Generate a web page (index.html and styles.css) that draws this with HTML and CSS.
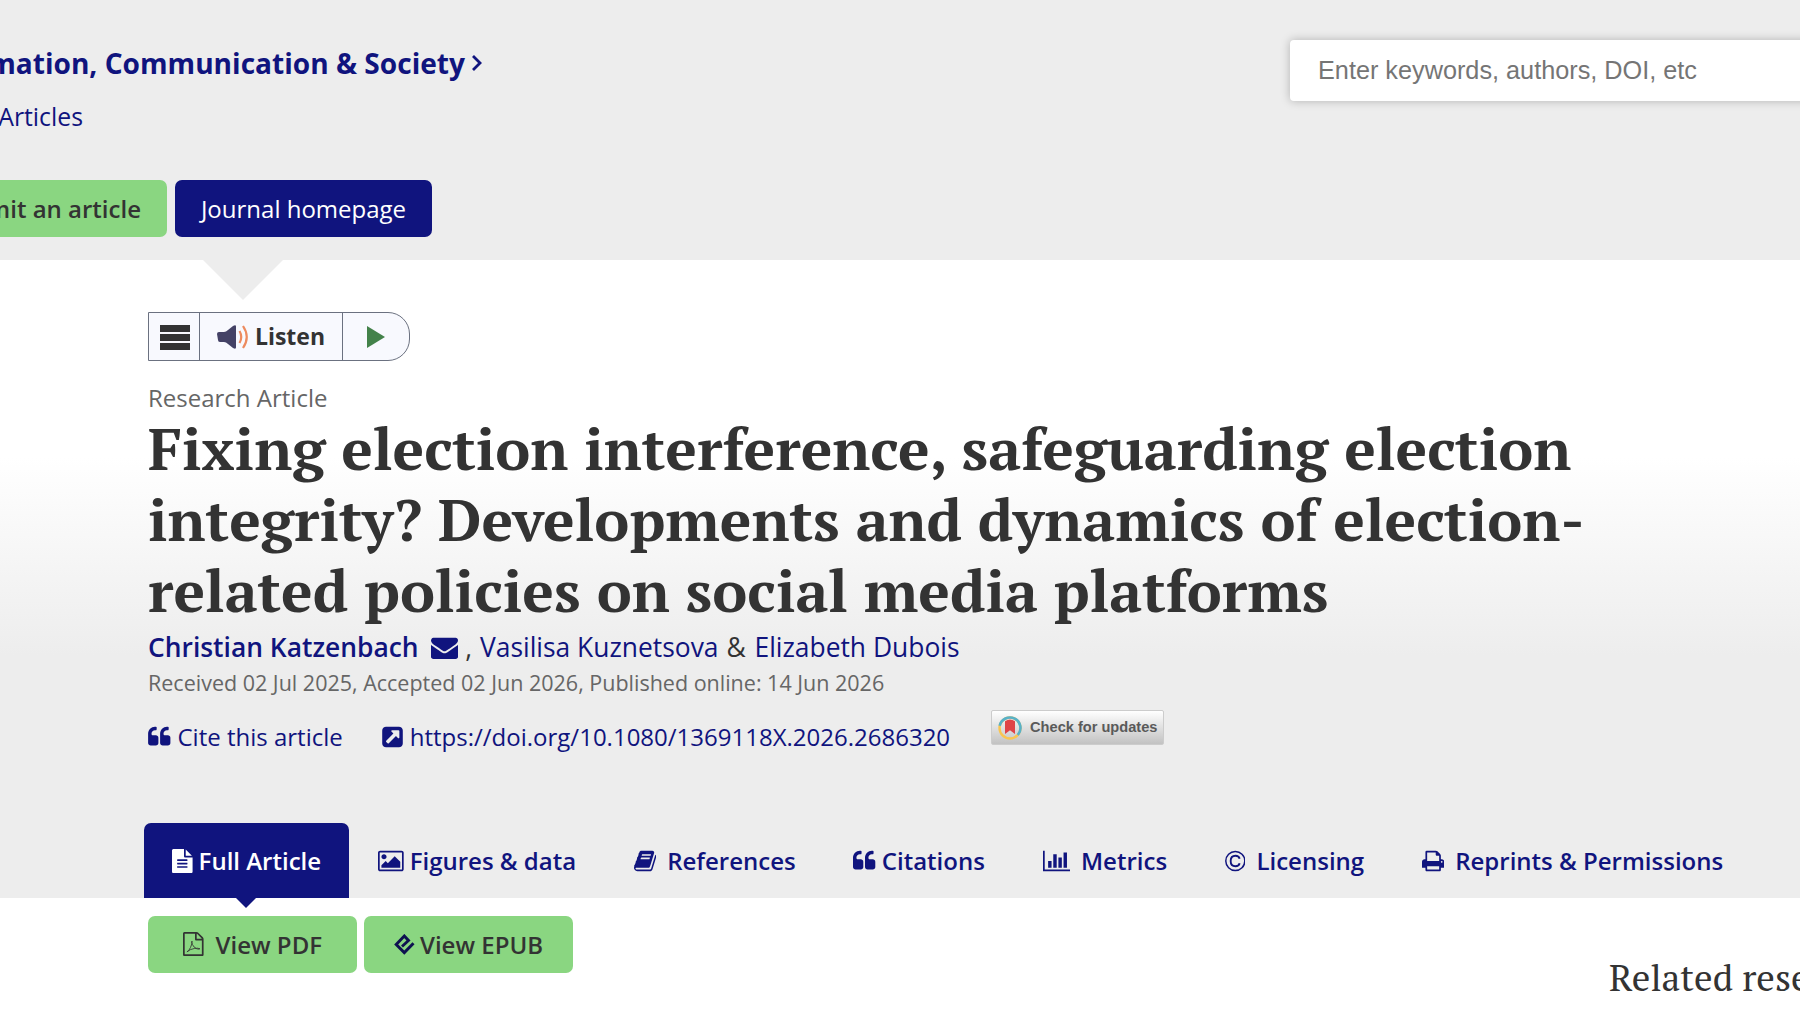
FILE: index.html
```html
<!DOCTYPE html>
<html lang="en">
<head>
    <meta charset="UTF-8">
    <meta name="viewport" content="width=device-width, initial-scale=1.0">
    <title>Fixing election interference, safeguarding election integrity?</title>
    <link rel="stylesheet" href="styles.css">
</head>
<body>

    <header class="journal-header">
        <div class="journal-info">
            <a class="journal-title" href="#"><span>Information, Communication &amp; Society</span>
                <svg class="chevron" viewBox="0 0 10 16"><path d="M1 1l7 7-7 7" fill="none" stroke="currentColor" stroke-width="2.800"/></svg>
            </a>
            <a class="journal-sub" href="#">Latest Articles</a>
            <div class="journal-buttons">
                <a class="btn btn-submit" href="#">Submit an article</a>
                <a class="btn btn-home" href="#">Journal homepage</a>
            </div>
        </div>
        <input class="search" type="text" placeholder="Enter keywords, authors, DOI, etc">
    </header>

    <main class="article">
        <div class="listen">
            <span class="listen-menu"><i></i><i></i><i></i></span>
            <span class="listen-main">
                <svg class="speaker" viewBox="0 0 32 24">
                    <path d="M0 9q0-2 2-2h5q2 0 4-2l5-4q3-1.500 3 .5v21q0 2-3 .5l-5-4q-2-2-4-2H3q-2 0-2-2z" fill="#444266"/>
                    <path d="M22.500 6q3.500 6 0 12M26 1q7.500 11 0 22" fill="none" stroke="#ed8b5f" stroke-width="2.200"/>
                </svg>
                <b>Listen</b>
            </span>
            <span class="listen-play"><svg viewBox="0 0 18 22"><path d="M0 0l18 11L0 22z" fill="#43824a"/></svg></span>
        </div>

        <div class="article-type">Research Article</div>
        <h1 class="article-title">Fixing election interference, safeguarding election integrity? Developments and dynamics of election-related policies on social media platforms</h1>

        <div class="authors">
            <a class="corresponding" href="#">Christian Katzenbach</a>
            <svg class="envelope" viewBox="0 0 1792 1792"><path d="M1792 710v794q0 66-47 113t-113 47h-1472q-66 0-113-47t-47-113v-794q44 49 101 87 362 246 497 345 57 42 92.500 65.500t94.500 48 110 24.500h2q51 0 110-24.500t94.500-48 92.500-65.500q170-123 498-345 57-39 100-87zm0-294q0 79-49 151t-122 123q-376 261-468 325-10 7-42.500 31t-54 38.500-52 32.500-57.500 27-50 9h-2q-23 0-50-9t-57.500-27-52-32.500-54-38.500-42.500-31q-91-64-262-182.500t-205-142.500q-62-42-117-115.500t-55-136.500q0-78 41.500-130t118.500-52h1472q65 0 112.500 47t47.500 113z"/></svg>
            <span class="comma">,</span>
            <a href="#">Vasilisa Kuznetsova</a> <span class="amp">&amp;</span> <a href="#">Elizabeth Dubois</a>
        </div>
        <div class="dates">Received 02 Jul 2025, Accepted 02 Jun 2026, Published online: 14 Jun 2026</div>

        <div class="article-links">
            <a class="cite" href="#"><svg class="icon" style="width: 22.500px" viewBox="64 0 1664 1792"><path d="M832 960v384q0 80-56 136t-136 56h-384q-80 0-136-56t-56-136v-704q0-104 40.500-198.500t109.500-163.500 163.500-109.500 198.500-40.500h64q26 0 45 19t19 45v128q0 26-19 45t-45 19h-64q-106 0-181 75t-75 181v32q0 40 28 68t68 28h224q80 0 136 56t56 136zm896 0v384q0 80-56 136t-136 56h-384q-80 0-136-56t-56-136v-704q0-104 40.500-198.500t109.500-163.500 163.500-109.500 198.500-40.500h64q26 0 45 19t19 45v128q0 26-19 45t-45 19h-64q-106 0-181 75t-75 181v32q0 40 28 68t68 28h224q80 0 136 56t56 136z"/></svg>Cite this article</a>
            <a class="doi" href="#"><svg class="icon" style="width: 21px" viewBox="128 0 1536 1792"><path d="M1408 928v-480q0-26-19-45t-45-19h-480q-42 0-59 39-17 41 14 70l144 144-534 534q-19 19-19 45t19 45l102 102q19 19 45 19t45-19l534-534 144 144q18 19 45 19 12 0 25-5 39-17 39-59zm256-512v960q0 119-84.500 203.500t-203.500 84.500h-960q-119 0-203.500-84.500t-84.500-203.500v-960q0-119 84.500-203.500t203.500-84.500h960q119 0 203.500 84.500t84.500 203.500z"/></svg>https://doi.org/10.1080/1369118X.2026.2686320</a>
            <a class="crossmark" href="#">
                <svg viewBox="0 0 24 24">
                    <circle cx="12" cy="12" r="10.500" fill="none" stroke="#fac550" stroke-width="2.400"/>
                    <path d="M1.700 9.800A10.500 10.500 0 1 1 19.800 19" fill="none" stroke="#57b1c9" stroke-width="2.600"/>
                    <path d="M7 5.200q5-3.500 10 0v12.800l-5-3.800-5 3.800z" fill="#df4347"/>
                </svg>
                <span>Check for updates</span>
            </a>
        </div>

        <nav class="tabs">
            <a class="tab active" href="#"><svg class="icon" style="width: 20.600px" viewBox="128 0 1536 1792"><path d="M1596 476q14 14 28 36h-472v-472q22 14 36 28zm-476 164h544v1056q0 40-28 68t-68 28h-1344q-40 0-68-28t-28-68v-1600q0-40 28-68t68-28h800v544q0 40 28 68t68 28zm160 736v-64q0-14-9-23t-23-9h-704q-14 0-23 9t-9 23v64q0 14 9 23t23 9h704q14 0 23-9t9-23zm0-256v-64q0-14-9-23t-23-9h-704q-14 0-23 9t-9 23v64q0 14 9 23t23 9h704q14 0 23-9t9-23zm0-256v-64q0-14-9-23t-23-9h-704q-14 0-23 9t-9 23v64q0 14 9 23t23 9h704q14 0 23-9t9-23z"/></svg>Full Article</a>
            <a class="tab" href="#"><svg class="icon" style="width: 25.700px" viewBox="-64 0 1920 1792"><path d="M576 576q0 80-56 136t-136 56-136-56-56-136 56-136 136-56 136 56 56 136zm1024 384v448h-1408v-192l320-320 160 160 512-512zm96-704h-1600q-13 0-22.500 9.500t-9.500 22.500v1216q0 13 9.500 22.500t22.500 9.500h1600q13 0 22.500-9.500t9.500-22.500v-1216q0-13-9.500-22.500t-22.500-9.500zm160 32v1216q0 66-47 113t-113 47h-1600q-66 0-113-47t-47-113v-1216q0-66 47-113t113-47h1600q66 0 113 47t47 113z"/></svg>Figures &amp; data</a>
            <a class="tab wide" href="#"><svg class="icon" style="width: 22.300px" viewBox="64 0 1664 1792"><path d="M1703 478q40 57 18 129l-275 906q-19 64-76.500 107.500t-122.500 43.500h-923q-77 0-148.500-53.500t-99.500-131.500q-24-67-2-127 0-4 3-27t4-37q1-8-3-21.500t-3-19.500q2-11 8-21t16.500-23.500 16.500-23.500q23-38 45-91.500t30-91.500q3-10 .5-30t-.5-28q3-11 17-28t17-23q21-36 42-92t25-90q1-9-2.500-32t.5-28q4-13 22-30.500t22-22.500q19-26 42.500-84.500t27.500-96.500q1-8-3-25.500t-2-26.500q2-8 9-18t18-23 17-21q8-12 16.500-30.500t15-35 16-36 19.500-32 26.500-23.500 36-11.500 47.500 5.500l-1 3q38-9 51-9h761q74 0 114 56t18 130l-274 906q-36 119-71.500 153.500t-128.500 34.500h-869q-27 0-38 15-11 16-1 43 24 70 144 70h923q29 0 56-15.500t35-41.500l300-987q7-22 5-57 38 15 59 43zm-1064 2q-4 13 2 22.500t20 9.500h608q13 0 25.500-9.500t16.500-22.500l21-64q4-13-2-22.500t-20-9.500h-608q-13 0-25.500 9.500t-16.500 22.500zm-83 256q-4 13 2 22.500t20 9.500h608q13 0 25.500-9.500t16.500-22.500l21-64q4-13-2-22.500t-20-9.500h-608q-13 0-25.500 9.500t-16.500 22.500z"/></svg>References</a>
            <a class="tab" href="#"><svg class="icon" style="width: 22.300px" viewBox="64 0 1664 1792"><path d="M832 960v384q0 80-56 136t-136 56h-384q-80 0-136-56t-56-136v-704q0-104 40.500-198.500t109.500-163.500 163.500-109.500 198.500-40.500h64q26 0 45 19t19 45v128q0 26-19 45t-45 19h-64q-106 0-181 75t-75 181v32q0 40 28 68t68 28h224q80 0 136 56t56 136zm896 0v384q0 80-56 136t-136 56h-384q-80 0-136-56t-56-136v-704q0-104 40.500-198.500t109.500-163.500 163.500-109.500 198.500-40.500h64q26 0 45 19t19 45v128q0 26-19 45t-45 19h-64q-106 0-181 75t-75 181v32q0 40 28 68t68 28h224q80 0 136 56t56 136z"/></svg>Citations</a>
            <a class="tab wide" href="#"><svg class="icon" style="width: 27.400px" viewBox="0 0 2048 1792"><path d="M640 896v512h-256v-512h256zm384-512v1024h-256v-1024h256zm1024 1152v128h-2048v-1536h128v1408h1920zm-640-896v768h-256v-768h256zm384-384v1152h-256v-1152h256z"/></svg>Metrics</a>
            <a class="tab wide" href="#"><svg class="icon" style="width: 20.600px" viewBox="128 0 1536 1792"><g fill="none" stroke="currentColor"><circle cx="896" cy="896" r="710" stroke-width="110"/><path d="M1220 720q-60-220-310-220-360 0-360 396t360 396q250 0 310-230" stroke-width="140"/></g></svg>Licensing</a>
            <a class="tab wide" href="#"><svg class="icon" style="width: 22.300px" viewBox="64 0 1664 1792"><path d="M448 1536h896v-256h-896v256zm0-640h896v-384h-160q-40 0-68-28t-28-68v-160h-640v640zm1152 64q0-26-19-45t-45-19-45 19-19 45 19 45 45 19 45-19 19-45zm128 0v416q0 13-9.500 22.500t-22.500 9.500h-224v160q0 40-28 68t-68 28h-960q-40 0-68-28t-28-68v-160h-224q-13 0-22.500-9.500t-9.500-22.500v-416q0-79 56.500-135.500t135.500-56.500h64v-544q0-40 28-68t68-28h672q40 0 88 20t76 48l152 152q28 28 48 76t20 88v256h64q79 0 135.500 56.500t56.500 135.500z"/></svg>Reprints &amp; Permissions</a>
        </nav>
    </main>

    <section class="content">
        <div class="downloads">
            <a class="btn btn-view" href="#"><svg class="icon pdf" style="width: 20.600px" viewBox="128 0 1536 1792"><path d="M1596 380q28 28 48 76t20 88v1152q0 40-28 68t-68 28h-1344q-40 0-68-28t-28-68v-1600q0-40 28-68t68-28h896q40 0 88 20t76 48zm-444-244v376h376q-10-29-22-41l-313-313q-12-12-41-22zm384 1528v-1024h-416q-40 0-68-28t-28-68v-416h-768v1536h1280z"/><path d="M420 1480q130-20 270-330 150-330 110-470-60 60 20 240 110 240 330 330 180 60 240 0-150-70-420-20-330 60-550 250z" fill="none" stroke="currentColor" stroke-width="64"/></svg>View PDF</a>
            <a class="btn btn-view" href="#"><svg class="epub" viewBox="0 0 21 21"><path d="M8 12.500l6.500-6L10.300 2 2.200 10.400l8.100 8.200 9.200-9.400" fill="none" stroke="#0e1150" stroke-width="2.900"/></svg>View EPUB</a>
        </div>
        <h2 class="related">Related research</h2>
    </section>

</body>
</html>
```
FILE: styles.css
```css
* {
    box-sizing: border-box;
}

body {
    margin: 0;
    width: 1800px;
    height: 1015px;
    overflow: hidden;
    background: #fff;
    color: #333;
    font-family: "Open Sans", sans-serif;
    font-size: 24px;
}

a {
    color: #10147e;
    text-decoration: none;
}

svg {
    fill: currentColor;
    flex: none;
}

/* Journal header */
.journal-header {
    position: relative;
    display: flex;
    justify-content: space-between;
    height: 260px;
    background: #ededed;
}

.journal-header::after {
    content: "";
    position: absolute;
    left: 203px;
    top: 260px;
    border: 40px solid transparent;
    border-top-color: #ededed;
    border-bottom: 0;
}

.journal-info {
    width: 600px;
}

.journal-title {
    display: flex;
    justify-content: flex-end;
    align-items: center;
    width: 482px;
    height: 40px;
    margin-top: 43px;
    font-size: 28.100px;
    font-weight: 700;
    white-space: nowrap;
}

.journal-title span {
    padding-bottom: 1px;
}

.chevron {
    width: 10px;
    height: 16px;
    margin-left: 7px;
}

.journal-sub {
    display: flex;
    justify-content: flex-end;
    width: 83px;
    height: 34px;
    line-height: 34px;
    margin-top: 16px;
    font-size: 24.800px;
    white-space: nowrap;
}

.journal-buttons {
    display: flex;
    justify-content: flex-end;
    gap: 8px;
    width: 432px;
    margin-top: 47px;
}

.btn {
    display: flex;
    flex: none;
    align-items: center;
    justify-content: center;
    height: 57px;
    padding-bottom: 1px;
    border-radius: 7px;
    white-space: nowrap;
}

.btn-submit,
.btn-view {
    background: #8ad681;
    color: #333;
    font-weight: 600;
}

.btn-submit {
    padding: 0 26px 1px;
}

.btn-home {
    width: 257px;
    background: #10147e;
    color: #fff;
}

.search {
    width: 540px;
    height: 61px;
    margin: 40px -30px 0 0;
    padding: 0 28px;
    border: 0;
    border-radius: 4px;
    background: #fff;
    box-shadow: 0 0 10px rgba(0, 0, 0, 0.25);
    font-family: "Liberation Sans", Arial, sans-serif;
    font-size: 25.250px;
}

.search::placeholder {
    color: #757575;
}

/* Article */
.article {
    height: 638px;
    padding: 52px 0 0 148px;
    background: linear-gradient(#fff 31%, #ededed 62%);
}

.listen {
    display: flex;
    width: 262px;
    height: 49px;
    border: 1px solid #6b7180;
    border-radius: 0 22px 22px 0;
    background: #f8f9fe;
    font-size: 23px;
}

.listen span {
    display: flex;
    align-items: center;
    justify-content: center;
}

.listen-menu {
    flex-direction: column;
    gap: 2px;
    width: 51px;
    padding: 2px 0 0 1px;
    border-right: 1px solid #6b7180;
}

.listen-menu i {
    width: 30px;
    height: 7px;
    background: #333;
}

.listen-main {
    gap: 6px;
    width: 143px;
    border-right: 1px solid #6b7180;
}

.listen-main b {
    padding-bottom: 2px;
}

.speaker {
    width: 32px;
    height: 24px;
}

.listen-play {
    width: 65px;
}

.listen-play svg {
    width: 18px;
    height: 22px;
}

.article-type {
    height: 31px;
    margin-top: 21px;
    line-height: 32px;
}

.article-type,
.dates {
    color: #666;
}

.article-title {
    width: 1480px;
    margin: 0;
    padding-bottom: 3px;
    font-family: "PT Serif", "Liberation Serif", serif;
    font-size: 59px;
    line-height: 71px;
}

.authors {
    height: 36px;
    line-height: 36px;
    font-size: 26.400px;
}

.corresponding {
    font-weight: 600;
}

.envelope {
    width: 27px;
    height: 27px;
    margin-left: 6px;
    vertical-align: -4px;
    fill: #10147e;
}

.comma {
    margin-right: 1px;
}

.amp {
    margin: 0 2px 0 1px;
}

.dates {
    height: 34px;
    line-height: 36px;
    font-size: 21.500px;
}

.icon {
    height: 24px;
    margin-right: 6px;
    vertical-align: -3.400px;
}

.article-links {
    display: flex;
    height: 76px;
    line-height: 76px;
}

.article-links .icon {
    margin-right: 7px;
}

.doi {
    margin-left: 39px;
}

.crossmark {
    display: flex;
    align-items: center;
    width: 173px;
    height: 35px;
    margin: 11px 0 0 41px;
    padding-left: 6px;
    border: 1px solid #ccc;
    border-radius: 2px;
    background: linear-gradient(#fff, #c2c2c2);
    color: #5a5a5a;
    font-family: "Liberation Sans", Arial, sans-serif;
    font-size: 14.600px;
    font-weight: 700;
    line-height: 33px;
    white-space: nowrap;
}

.crossmark svg {
    width: 24px;
    height: 26px;
    margin-right: 8px;
}

/* Tabs */
.tabs {
    display: flex;
    height: 75px;
    margin: 48px 0 0 -4px;
    line-height: 75px;
    font-weight: 600;
}

.tab {
    padding: 0 28.900px;
    white-space: nowrap;
}

.tab.wide .icon {
    margin-right: 11px;
}

.tab.active {
    position: relative;
    padding: 0 28px;
    border-radius: 7px 7px 0 0;
    background: #10147e;
    color: #fff;
}

.tab.active::after {
    content: "";
    position: absolute;
    left: 92px;
    top: 75px;
    border: 10px solid transparent;
    border-top-color: #10147e;
    border-bottom: 0;
}

/* Content */
.content {
    display: flex;
    justify-content: space-between;
    padding: 18px 0 0 148px;
}

.downloads {
    display: flex;
    gap: 7px;
}

.btn-view {
    width: 209px;
}

.icon.pdf {
    margin-right: 12px;
}

.epub {
    width: 21px;
    height: 21px;
    margin-right: 5px;
}

.related {
    width: 191px;
    margin: 38px 0 0;
    font-family: "PT Serif", "Liberation Serif", serif;
    font-size: 37px;
    font-weight: 400;
    line-height: 48px;
    white-space: nowrap;
}
```
